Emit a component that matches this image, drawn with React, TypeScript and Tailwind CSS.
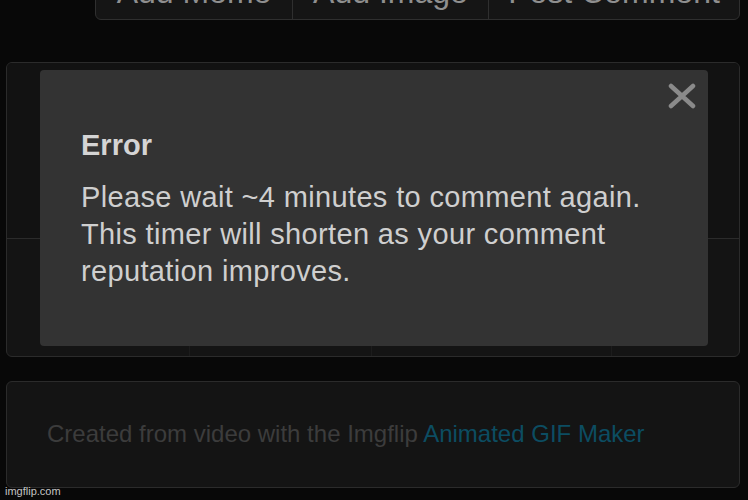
import React from "react";

const buttons = [
  { label: "Add Meme", width: "w-[197px]" },
  { label: "Add Image", width: "w-[196px]" },
  { label: "Post Comment", width: "flex-1" },
];

const CloseIcon = () => (
  <svg width="28" height="26" viewBox="0 0 28 26" fill="none">
    <path
      d="M3 3 L25 23 M25 3 L3 23"
      stroke="#8a8a8a"
      strokeWidth="4.5"
      strokeLinecap="round"
    />
  </svg>
);

export default function App() {
  return (
    <div className="relative h-[500px] w-[748px] overflow-hidden bg-[#080808] font-['Liberation_Sans',Arial,sans-serif]">
      {/* Button row, cut off at the top */}
      <div className="ml-[95px] mr-[8px] -mt-[30px] flex h-[50px] overflow-hidden rounded-b-[6px] border border-[#2f2f2f] bg-[#151515]">
        {buttons.map((b, i) => (
          <div
            key={b.label}
            className={`${b.width} flex items-center justify-center pb-[6px] text-[32px] leading-none text-[#8f8f8f] ${
              i < buttons.length - 1 ? "border-r border-[#2f2f2f]" : ""
            }`}
          >
            {b.label}
          </div>
        ))}
      </div>

      {/* Comment form panel */}
      <div className="ml-[6px] mr-[8px] mt-[42px] flex h-[295px] flex-col overflow-hidden rounded-[6px] border border-[#2b2b2b] bg-[#141414]">
        <div className="h-[176px] border-b border-[#2b2b2b] bg-[#121212]" />
        <div className="flex flex-1">
          <div className="w-[183px] border-r border-[#1c1c1c]" />
          <div className="w-[182px] border-r border-[#1c1c1c]" />
          <div className="w-[240px] border-r border-[#1c1c1c]" />
          <div className="flex-1" />
        </div>
      </div>

      {/* Footer panel */}
      <div className="ml-[6px] mr-[8px] mt-[24px] flex h-[107px] items-center rounded-[6px] border border-[#2b2b2b] bg-[#141414] pl-[40px] pb-[2px]">
        <p className="text-[24px] leading-[28px] text-[#3c3c3c]">
          Created from video with the Imgflip{" "}
          <span className="text-[#0c4d62]">Animated GIF Maker</span>
        </p>
      </div>

      {/* Error modal */}
      <div className="absolute left-[40px] top-[70px] h-[276px] w-[668px] rounded-[4px] bg-[#333333] px-[41px] pt-[58px]">
        <button className="absolute right-[12px] top-[13px]" aria-label="Close">
          <CloseIcon />
        </button>
        <h2 className="mb-[17px] text-[29px] font-bold leading-[34px] text-[#d4d4d4]">
          Error
        </h2>
        <p className="text-[29px] leading-[37px] tracking-[0.35px] text-[#cfcfcf]">
          Please wait ~4 minutes to comment again. This timer will shorten as
          your comment reputation improves.
        </p>
      </div>

      {/* Watermark */}
      <div className="absolute bottom-[2px] left-[5px] text-[11px] leading-[13px] text-[#c4c4c4]">
        imgflip.com
      </div>
    </div>
  );
}
